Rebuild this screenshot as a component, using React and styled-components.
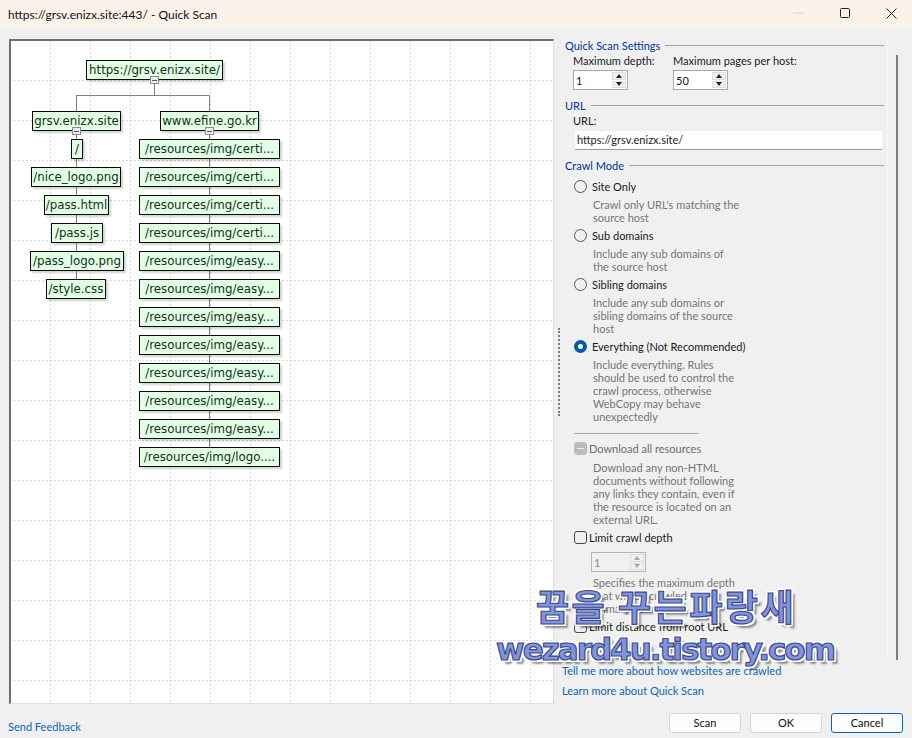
import React from 'react';
import styled, { createGlobalStyle } from 'styled-components';

const gridSvg = encodeURIComponent(
   `<svg xmlns="http://www.w3.org/2000/svg" width="40" height="40"><path d="M0.5 0V40M0 0.5H40" stroke="#d8d8d8" stroke-width="1" stroke-dasharray="2 2" fill="none"/></svg>`
);

const GlobalStyle = createGlobalStyle`
   html, body {
      margin: 0;
      padding: 0;
      background: #f0f0f0;
   }
   body {
      font-family: Lato, "Noto Sans", sans-serif;
      font-size: 11px;
      color: #1a1a1a;
   }
`;

const Window = styled.div`
   position: relative;
   width: 912px;
   height: 738px;
   overflow: hidden;
   display: flex;
   flex-direction: column;
   background: #f0f0f0;
`;

const TitleBar = styled.header`
   height: 28px;
   flex-shrink: 0;
   display: flex;
   align-items: center;
   justify-content: space-between;
   padding-left: 8px;
   background: #fbf3ea;
   font-size: 12px;
   color: #111;
`;

const WindowButtons = styled.div`
   display: flex;
   align-items: center;
   height: 100%;
   margin-right: -2px;
   padding-bottom: 2px;
   box-sizing: border-box;
`;

const WindowButton = styled.div`
   width: 46px;
   height: 100%;
   display: flex;
   align-items: center;
   justify-content: center;
`;

const Body = styled.main`
   display: flex;
   padding: 11px 0 0 9px;
   height: 665px;
`;

const Canvas = styled.section`
   position: relative;
   width: 545px;
   height: 665px;
   box-sizing: border-box;
   flex-shrink: 0;
   border-top: 2px solid #6e6e6e;
   border-left: 2px solid #6e6e6e;
   border-right: 1px solid #dcdcdc;
   border-bottom: 1px solid #dcdcdc;
   background-color: #fff;
   background-image: url("data:image/svg+xml,${gridSvg}");
   background-position: -1px -1px;
`;

const Links = styled.svg`
   position: absolute;
   left: 0;
   top: 0;
`;

const Node = styled.div`
   position: absolute;
   box-sizing: border-box;
   height: 20px;
   display: flex;
   align-items: center;
   justify-content: center;
   background: #e3ffe3;
   border: 1px solid #0a0a0a;
   box-shadow: 2px 2px 2px rgba(0, 0, 0, 0.18);
   font-family: "DejaVu Sans", Verdana, sans-serif;
   font-size: 11.8px;
   color: #12301e;
   white-space: nowrap;
`;

const Toggle = styled.div`
   position: absolute;
   box-sizing: border-box;
   width: 9px;
   height: 8px;
   background: #eceef4;
   border: 1px solid #8a8a92;
   display: flex;
   align-items: center;
   justify-content: center;

   &::after {
      content: "";
      width: 5px;
      height: 1px;
      background: #555;
   }
`;

const Side = styled.aside`
   position: relative;
   flex: 1;
   display: flex;
   flex-direction: column;
   min-width: 0;
`;

const Splitter = styled.div`
   position: absolute;
   left: 4px;
   top: 289px;
   height: 88px;
   border-left: 2px dotted #777;
`;

const ScrollPane = styled.div`
   height: 621px;
   overflow: hidden;
   border-right: 1px solid #fafafa;
   width: 334px;
   padding: 0 0 0 11px;
   margin-top: -1px;
   box-sizing: border-box;
`;

const ScrollBar = styled.div`
   position: absolute;
   left: 342px;
   top: 16px;
   width: 2px;
   height: 605px;
   background: #7c7c7c;
`;

const GroupHead = styled.div`
   display: flex;
   align-items: center;
   gap: 5px;
   height: 15px;
   color: #003399;
   width: 319px;
   white-space: nowrap;

   &::after {
      content: "";
      flex: 1;
      height: 1px;
      background: #a0a0a0;
   }
`;

const SpinRow = styled.div`
   display: flex;
   padding-left: 8px;
   margin-bottom: 8px;
`;

const Field = styled.div`
   display: flex;
   flex-direction: column;
   width: 100px;
   gap: 2px;
`;

const FieldLabel = styled.label`
   height: 15px;
   line-height: 15px;
   white-space: nowrap;
`;

const Spinner = styled.div`
   box-sizing: border-box;
   width: 55px;
   height: 20px;
   display: flex;
   align-items: center;
   justify-content: space-between;
   padding: 1px 1px 1px 2px;
   background: ${(p) => (p.$disabled ? '#f0f0f0' : '#fff')};
   border: 1px solid ${(p) => (p.$disabled ? '#b5b5b5' : '#a8a8a8')};
   color: ${(p) => (p.$disabled ? '#888' : '#111')};
`;

const SpinArrows = styled.div`
   width: 14px;
   height: 16px;
   display: flex;
   flex-direction: column;
   gap: 1px;
`;

const SpinArrow = styled.div`
   flex: 1;
   display: flex;
   align-items: center;
   justify-content: center;
   background: #f0f0f0;
   border: 1px solid #dedede;

   &::after {
      content: "";
      border-left: 3px solid transparent;
      border-right: 3px solid transparent;
      ${(p) => (p.$down ? 'border-top' : 'border-bottom')}: 4px solid ${(p) => (p.$disabled ? '#aaa' : '#222')};
   }
`;

const UrlBlock = styled.div`
   padding-left: 8px;
   margin-bottom: 8px;
`;

const UrlInput = styled.div`
   box-sizing: border-box;
   width: 307px;
   height: 19px;
   margin: 3px 0 0 2px;
   padding-left: 2px;
   line-height: 18px;
   background: #fff;
   border-bottom: 1px solid #9a9a9a;
`;

const Options = styled.div`
   padding: 6px 0 0 9px;
   width: 200px;
`;

const OptionRow = styled.div`
   display: flex;
   align-items: center;
   height: 15px;
   gap: ${(p) => p.$gap || 5}px;
   white-space: nowrap;
   color: ${(p) => (p.$muted ? '#6d6d6d' : '#1a1a1a')};
`;

const Radio = styled.span`
   box-sizing: border-box;
   width: 13px;
   height: 13px;
   flex-shrink: 0;
   border-radius: 50%;
   background: ${(p) => (p.$on ? '#fff' : 'transparent')};
   border: ${(p) => (p.$on ? '4px solid #0058a8' : '1px solid #555')};
`;

const Check = styled.span`
   box-sizing: border-box;
   position: relative;
   width: 13px;
   height: 13px;
   flex-shrink: 0;
   border-radius: 3px;
   border: 1px solid ${(p) => (p.$mixed ? '#bdbdbd' : '#444')};
   background: ${(p) => (p.$mixed ? '#bdbdbd' : 'transparent')};

   &::after {
      content: "";
      display: ${(p) => (p.$mixed ? 'block' : 'none')};
      position: absolute;
      left: 2px;
      top: 5px;
      width: 7px;
      height: 1px;
      background: #eee;
   }
`;

const Hint = styled.p`
   margin: ${(p) => p.$top || 4}px 0 4px 19px;
   line-height: 13px;
   width: 148px;
   color: #757575;
`;

const Separator = styled.hr`
   width: 125px;
   height: 1px;
   border: 0;
   margin: 10px 0 7px 0;
   background: #a8a8a8;
`;

const DepthSpinner = styled.div`
   margin: 7px 0 4px 17px;
`;

const LinkText = styled.a`
   display: block;
   height: 20px;
   line-height: 20px;
   color: #0a66b5;
   white-space: nowrap;
`;

const SideLinks = styled.div`
   padding: 0 0 0 8px;
   margin-top: 2px;
`;

const Footer = styled.footer`
   display: flex;
   align-items: center;
   justify-content: space-between;
   height: 34px;
   padding: 0 9px 0 8px;
`;

const Actions = styled.div`
   display: flex;
   gap: 9px;
   margin-top: 3px;
`;

const Button = styled.button`
   box-sizing: border-box;
   width: 72px;
   height: 20px;
   padding: 0;
   font: inherit;
   color: #111;
   background: #fdfdfd;
   border-radius: 3px;
   border: 1px solid ${(p) => (p.$primary ? '#0067c0' : '#d4d4d4')};
`;

const Feedback = styled.a`
   color: #0a66b5;
   margin-top: 11px;
`;

const Watermark = styled.div`
   position: absolute;
   white-space: nowrap;
   font-weight: 700;
   color: #8094e0;
   -webkit-text-stroke: 1.2px #3d4a86;
   text-shadow:
      -2px 0 0 #fff, 2px 0 0 #fff, 0 -2px 0 #fff, 0 2px 0 #fff,
      -2px -2px 0 #fff, 2px -2px 0 #fff, -2px 2px 0 #fff, 2px 2px 0 #fff,
      4px 4px 2px rgba(40, 40, 40, 0.5);
`;

const WatermarkKo = styled(Watermark)`
   left: 536px;
   top: 582px;
   font-family: "Noto Sans CJK KR", sans-serif;
   font-size: 36px;
   line-height: 46px;
   letter-spacing: 2.5px;
`;

const WatermarkEn = styled(Watermark)`
   left: 496px;
   top: 629px;
   font-family: "DejaVu Sans", sans-serif;
   font-size: 31px;
   line-height: 40px;
   letter-spacing: -2px;
`;

const ROOT = { label: 'https://grsv.enizx.site/', x: 75, w: 137, y: 19 };
const LEFT_HOST = { label: 'grsv.enizx.site', x: 21, w: 89, y: 70 };
const RIGHT_HOST = { label: 'www.efine.go.kr', x: 149, w: 99, y: 70 };

const LEFT_PAGES = [
   { label: '/', x: 60, w: 12 },
   { label: '/nice_logo.png', x: 20, w: 90 },
   { label: '/pass.html', x: 33, w: 65 },
   { label: '/pass.js', x: 40, w: 52 },
   { label: '/pass_logo.png', x: 19, w: 94 },
   { label: '/style.css', x: 35, w: 60 },
];

const RIGHT_PAGES = [
   '/resources/img/certi...',
   '/resources/img/certi...',
   '/resources/img/certi...',
   '/resources/img/certi...',
   '/resources/img/easy...',
   '/resources/img/easy...',
   '/resources/img/easy...',
   '/resources/img/easy...',
   '/resources/img/easy...',
   '/resources/img/easy...',
   '/resources/img/easy...',
   '/resources/img/logo....',
];

const TreeNode = ({ label, x, y, w }) => (
   <Node style={{ left: x, top: y, width: w }}>{label}</Node>
);

const SiteMap = () => (
   <Canvas>
      <Links width="543" height="662" fill="none" stroke="#808080">
         <path d="M143.5 38V54.5M65.5 54.5H198.5M65.5 54V70M198.5 54V70M65.5 88V252M198.5 88V410" />
      </Links>
      <TreeNode {...ROOT} />
      <TreeNode {...LEFT_HOST} />
      <TreeNode {...RIGHT_HOST} />
      {LEFT_PAGES.map((page, index) => (
         <TreeNode key={page.label} {...page} y={98 + index * 28} />
      ))}
      {RIGHT_PAGES.map((label, index) => (
         <TreeNode key={index} label={label} x={128} w={141} y={98 + index * 28} />
      ))}
      <Toggle style={{ left: 139, top: 35 }} />
      <Toggle style={{ left: 61, top: 86 }} />
      <Toggle style={{ left: 194, top: 86 }} />
   </Canvas>
);

const SpinBox = ({ value, disabled }) => (
   <Spinner $disabled={disabled}>
      {value}
      <SpinArrows>
         <SpinArrow $disabled={disabled} />
         <SpinArrow $disabled={disabled} $down />
      </SpinArrows>
   </Spinner>
);

const CrawlOption = ({ label, on, children }) => (
   <>
      <OptionRow>
         <Radio $on={on} />
         {label}
      </OptionRow>
      <Hint>{children}</Hint>
   </>
);

const App = () => (
   <Window>
      <GlobalStyle />
      <TitleBar>
         https://grsv.enizx.site:443/ - Quick Scan
         <WindowButtons>
            <WindowButton>
               <svg width="10" height="10" viewBox="0 0 10 10"><path d="M0 5H10" stroke="#d8d3cc" /></svg>
            </WindowButton>
            <WindowButton>
               <svg width="10" height="10" viewBox="0 0 10 10" fill="none"><rect x="0.5" y="0.5" width="9" height="9" rx="1" stroke="#222" /></svg>
            </WindowButton>
            <WindowButton>
               <svg width="11" height="11" viewBox="0 0 11 11"><path d="M0.5 0.5L10.5 10.5M10.5 0.5L0.5 10.5" stroke="#222" /></svg>
            </WindowButton>
         </WindowButtons>
      </TitleBar>
      <Body>
         <SiteMap />
         <Side>
            <Splitter />
            <ScrollPane>
               <GroupHead>Quick Scan Settings</GroupHead>
               <SpinRow>
                  <Field>
                     <FieldLabel>Maximum depth:</FieldLabel>
                     <SpinBox value="1" />
                  </Field>
                  <Field>
                     <FieldLabel>Maximum pages per host:</FieldLabel>
                     <SpinBox value="50" />
                  </Field>
               </SpinRow>
               <GroupHead>URL</GroupHead>
               <UrlBlock>
                  <FieldLabel>URL:</FieldLabel>
                  <UrlInput>https://grsv.enizx.site/</UrlInput>
               </UrlBlock>
               <GroupHead>Crawl Mode</GroupHead>
               <Options>
                  <CrawlOption label="Site Only">
                     Crawl only URL's matching the source host
                  </CrawlOption>
                  <CrawlOption label="Sub domains">
                     Include any sub domains of the source host
                  </CrawlOption>
                  <CrawlOption label="Sibling domains">
                     Include any sub domains or sibling domains of the source host
                  </CrawlOption>
                  <CrawlOption label="Everything (Not Recommended)" on>
                     Include everything. Rules should be used to control the crawl process, otherwise WebCopy may behave unexpectedly
                  </CrawlOption>
                  <Separator />
                  <OptionRow $gap={2} $muted>
                     <Check $mixed />
                     Download all resources
                  </OptionRow>
                  <Hint $top={5}>
                     Download any non-HTML documents without following any links they contain, even if the resource is located on an external URL.
                  </Hint>
                  <OptionRow $gap={2}>
                     <Check />
                     Limit crawl depth
                  </OptionRow>
                  <DepthSpinner>
                     <SpinBox value="1" disabled />
                  </DepthSpinner>
                  <Hint>
                     Specifies the maximum depth that will be crawled on the primary domain.
                  </Hint>
                  <OptionRow $gap={2}>
                     <Check />
                     Limit distance from root URL
                  </OptionRow>
               </Options>
            </ScrollPane>
            <ScrollBar />
            <SideLinks>
               <LinkText>Tell me more about how websites are crawled</LinkText>
               <LinkText>Learn more about Quick Scan</LinkText>
            </SideLinks>
         </Side>
      </Body>
      <Footer>
         <Feedback>Send Feedback</Feedback>
         <Actions>
            <Button>Scan</Button>
            <Button>OK</Button>
            <Button $primary>Cancel</Button>
         </Actions>
      </Footer>
      <WatermarkKo>꿈을 꾸는파랑새</WatermarkKo>
      <WatermarkEn>wezard4u.tistory.com</WatermarkEn>
   </Window>
);

export default App;
